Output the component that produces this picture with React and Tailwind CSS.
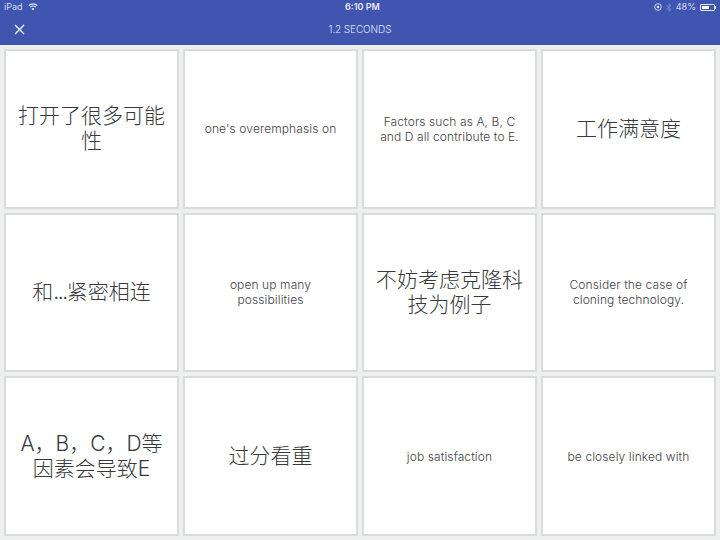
import React from "react";

const cards = [
  ["打开了很多可能性", "zh"],
  ["one's overemphasis on", "en"],
  ["Factors such as A, B, C and D all contribute to E.", "en"],
  ["工作满意度", "zh"],
  [<>和<span className="tracking-[-1.5px]">...</span>紧密相连</>, "zh"],
  ["open up many possibilities", "en"],
  ["不妨考虑克隆科技为例子", "zh"],
  ["Consider the case of cloning technology.", "en"],
  ["A，B，C，D等因素会导致E", "zh"],
  ["过分看重", "zh"],
  ["job satisfaction", "en"],
  ["be closely linked with", "en"],
];

export default function App() {
  return (
    <div className="w-[720px] h-[540px] overflow-hidden bg-[#eeefef] flex flex-col font-['Inter','Noto_Sans_CJK_SC',sans-serif]">
      <header className="h-[45px] shrink-0 bg-[#3f55b0] text-white flex flex-col">
        <div className="h-[14px] px-[4px] flex items-center justify-between relative text-[9px] text-[#d5daf0]">
          <div className="flex items-center gap-[5px]">
            <span>iPad</span>
            <svg width="10" height="8" viewBox="0 0 10 8" fill="none" stroke="#e4e7f6" strokeWidth="1.1">
              <path d="M0.7 2.6a6.2 6.2 0 0 1 8.6 0" />
              <path d="M2.2 4.2a4 4 0 0 1 5.6 0" />
              <path d="M5 7.4 3.6 5.8a2 2 0 0 1 2.8 0Z" fill="#e4e7f6" stroke="none" />
            </svg>
          </div>
          <span className="absolute left-[345px] top-0 h-[14px] leading-[14px] font-semibold text-[#e6e9f7]">6:10 PM</span>
          <div className="flex items-center gap-[4px]">
            <svg width="8" height="8" viewBox="0 0 8 8" fill="none" stroke="#dfe3f5" strokeWidth="0.9">
              <circle cx="4" cy="4" r="3.3" />
              <circle cx="4" cy="4" r="1.3" fill="#dfe3f5" stroke="none" />
            </svg>
            <svg width="6" height="9" viewBox="0 0 6 9" fill="none" stroke="#7f8fd0" strokeWidth="0.9">
              <path d="M0.6 2.4 5 6.4 3 8.2V0.8L5 2.6 0.6 6.6" />
            </svg>
            <span>48%</span>
            <div className="flex items-center">
              <div className="w-[15px] h-[7px] border border-[#e4e7f6] rounded-[1px] p-[1px]">
                <div className="w-[7px] h-full bg-white" />
              </div>
              <div className="w-[1px] h-[3px] bg-[#e4e7f6]" />
            </div>
          </div>
        </div>
        <div className="relative flex-1 flex items-center justify-center">
          <svg className="absolute left-[14px] top-[10px]" width="11" height="11" viewBox="0 0 11 11" stroke="#ffffff" strokeWidth="1.3" fill="none">
            <path d="M1 1 10 10M10 1 1 10" />
          </svg>
          <span className="text-[10px] font-light text-[#dfe3f5] -mt-[1px] tracking-[-0.1px]">1.2 SECONDS</span>
        </div>
      </header>
      <main className="flex-1 min-h-0 grid grid-cols-[repeat(4,175px)] grid-rows-3 gap-[4px] pt-[4px] pl-[4px] pb-[4px]">
        {cards.map(([t, k], i) => (
          <div key={i} className="bg-white border-2 border-[#d9dbdd] flex items-center justify-center text-center">
            {k === "zh" ? (
              <span className="text-[21px] font-light leading-[25px] px-[8px] -mt-[1px] text-[#37393c]">{t}</span>
            ) : (
              <span className="text-[12px] font-light tracking-[0.1px] leading-[15px] px-[12px] text-[#3f4245]">{t}</span>
            )}
          </div>
        ))}
      </main>
    </div>
  );
}
